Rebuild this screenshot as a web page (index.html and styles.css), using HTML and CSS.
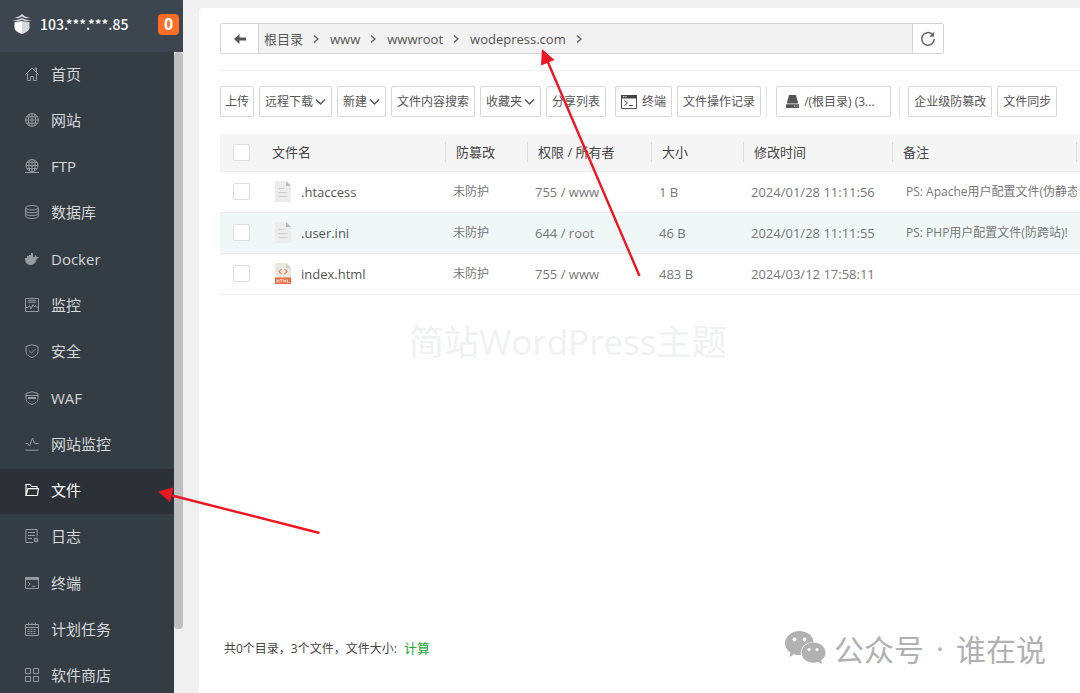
FILE: index.html
```html
<!DOCTYPE html>
<html lang="zh-CN">
<head>
<meta charset="utf-8">
<title>文件</title>
<link rel="stylesheet" href="styles.css">
</head>
<body>
<svg class="defs" aria-hidden="true">
  <symbol id="chev-right" viewBox="0 0 6 8"><path d="M1 .5 5 4 1 7.500" fill="none" stroke="currentColor" stroke-width="1.500"/></symbol>
  <symbol id="chev-down" viewBox="0 0 11 8"><path d="M1 1.500 5.500 6 10 1.500" fill="none" stroke="currentColor" stroke-width="1.300"/></symbol>
  <symbol id="doc" viewBox="0 0 16 21"><path d="M0 0h11l5 5v16H0z" fill="#ececec"/><path d="M11 0l5 5h-5z" fill="#b9b9b9"/><path d="M3.500 7.500h6M3.500 11.500h9M3.500 15.500h9" stroke="#cfcfcf"/></symbol>
</svg>
<div class="app">
  <aside class="sidebar">
    <header class="server">
      <svg class="logo" viewBox="0 0 20 20"><path d="M10 0 13 2.500 18 4 13.500 4.200 10 2.500 6.500 4.200 2 4 7 2.500z" fill="#ddd"/><path d="M0 6.800 6 5.800 10 4 14 5.800 20 6.800 14 7.300 10 5.800 6 7.300z" fill="#ddd"/><path d="M2.500 8.300 10 7v13c-4.500-1.500-7.500-3.500-7.500-6.500z" fill="#fff"/><path d="M17.500 8.300 10 7v13c4.500-1.500 7.500-3.500 7.500-6.500z" fill="#d8d8d8"/></svg>
      <span class="ip">103.***.***.85</span>
      <span class="count">0</span>
    </header>
    <div class="scroller">
      <nav class="nav">
        <a href="#"><svg viewBox="0 0 14 14"><path d="M.5 7.500 7 1l6.500 6.500M10 3V1h1.500v4M2.500 6.500v7h3V9.500h3v4h3v-7"/></svg>首页</a>
        <a href="#"><svg viewBox="0 0 14 14"><circle cx="7" cy="7" r="6.400"/><path d="M7 .5v13M.5 7h13M1.500 3.800h11M1.500 10.200h11M4.500 1.200c-1.500 4-1.500 8 0 11.600M9.500 1.200c1.500 4 1.500 8 0 11.600"/></svg>网站</a>
        <a href="#"><svg viewBox="0 0 14 14"><circle cx="7" cy="6.500" r="6"/><path d="M7 .5v12M1 6.500h12M2 3.500h10M2 9.500h10M4.800 1c-1.300 4-1.300 7 0 11M9.200 1c1.300 4 1.300 7 0 11M0 13.500h14"/></svg>FTP</a>
        <a href="#"><svg viewBox="0 0 14 14"><ellipse cx="7" cy="2.700" rx="6.300" ry="2.200"/><path d="M.7 2.700v8.500c0 3 12.600 3 12.600 0V2.700M.7 5.500c0 3 12.600 3 12.600 0M.7 8.400c0 3 12.600 3 12.600 0"/></svg>数据库</a>
        <a href="#"><svg viewBox="0 0 14 14"><path d="M0 6h2V4h2V3h2V1h2v4h1.500c.5-1 .5-2 1-2 1 .5 1 1.500 1 2H14c-.3 1.200-1.300 1.600-2.300 1.700C11 10.500 9 13 5.500 13 1.500 13 0 10 0 6z" fill="currentColor" stroke="none"/></svg>Docker</a>
        <a href="#"><svg viewBox="0 0 14 14"><path d="M.5.500h13v13H.500zM3 2.500h8M3 4.300h8M1 9.500h2l1.500-2L6 11l2-4.500L9.500 9l1-1.500L11.500 9h1.500"/></svg>监控</a>
        <a href="#"><svg viewBox="0 0 14 14"><path d="M7 .7 13 2.500v5c0 3-3 5-6 6-3-1-6-3-6-6v-5zM4.200 6.800l2.300 2.200 3.800-3.800"/></svg>安全</a>
        <a href="#"><svg viewBox="0 0 14 14"><path d="M7 .7 13 2.500v5c0 3-3 5-6 6-3-1-6-3-6-6v-5zM1 4.500h12"/><path d="M3 7h8" stroke-width="2"/></svg>WAF</a>
        <a href="#"><svg viewBox="0 0 14 14"><path d="M.5 6.500h2.500l1.500 2.500L7.500 1l2 5.500h4M.5 13.200h13"/></svg>网站监控</a>
        <a href="#" class="active" aria-current="page"><svg viewBox="0 0 14 14"><path d="M1 12.500V1.500h4l1.500 2H12v2.200M1 12.500 3 5.700h10.500l-1.200 6.800z" stroke-width="1.200"/></svg>文件</a>
        <a href="#"><svg viewBox="0 0 14 14"><path d="M8 13.500H.9V.5h11.200v7M3 3.500h7M3 6.500h7M3 9.500h4"/><circle cx="11" cy="11" r="1.600" stroke-width="1.400"/></svg>日志</a>
        <a href="#"><svg viewBox="0 0 14 14"><path d="M.5 1.500h13v11H.500zM3 6l2.200 2L3 10M7 10.300h3.500"/><path d="M.5 2.700h13" stroke-width="2.400"/></svg>终端</a>
        <a href="#"><svg viewBox="0 0 14 14"><path d="M.5 2.500h13v11H.500zM.5 5.500h13M3.500.5v3M7 .5v3M10.500.5v3"/><path d="M2.500 7.500h9M2.500 9.500h9M2.500 11.500h9" stroke-dasharray="2 1"/></svg>计划任务</a>
        <a href="#"><svg viewBox="0 0 14 14"><path d="M.5.500h5v5h-5zM8.500.500h5v5h-5zM.5 8.500h5v5h-5zM8.500 8.500h5v5h-5z"/></svg>软件商店</a>
      </nav>
      <div class="track"><div class="thumb"></div></div>
    </div>
  </aside>

  <main class="panel">
    <div class="pathbar">
      <button type="button" class="back" aria-label="返回"><svg viewBox="0 0 12 10"><path d="M0 5 5.500 0v3.500H12v3H5.500V10z" fill="#555"/></svg></button>
      <div class="crumbs">
        <a href="#">根目录</a><svg><use href="#chev-right"/></svg>
        <a href="#">www</a><svg><use href="#chev-right"/></svg>
        <a href="#">wwwroot</a><svg><use href="#chev-right"/></svg>
        <a href="#">wodepress.com</a><svg><use href="#chev-right"/></svg>
      </div>
      <button type="button" class="reload" aria-label="刷新"><svg viewBox="0 0 16 16"><path d="M12.500 3.500A6.300 6.300 0 1 0 14.300 8" fill="none" stroke="#666" stroke-width="1.500"/><path d="M14 .8v5H9.500z" fill="#666"/></svg></button>
    </div>

    <div class="toolbar">
      <button type="button" class="upload">上传</button>
      <button type="button">远程下载<svg class="down"><use href="#chev-down"/></svg></button>
      <button type="button">新建<svg class="down"><use href="#chev-down"/></svg></button>
      <button type="button">文件内容搜索</button>
      <button type="button">收藏夹<svg class="down"><use href="#chev-down"/></svg></button>
      <button type="button">分享列表</button>
      <button type="button" class="terminal"><svg viewBox="0 0 16 14"><path d="M.5.500h15v13H.500z" fill="none" stroke="#555"/><path d="M0 0h16v3.500H0z" fill="#444"/><path d="M2 1.700h4" stroke="#fff" stroke-dasharray="1 .7"/><path d="M3.500 5.500 6.500 8l-3 2.500M8 10.500h4" fill="none" stroke="#555"/></svg>终端</button>
      <button type="button">文件操作记录</button>
      <i class="sep"></i>
      <button type="button" class="disk"><svg viewBox="0 0 13 13"><path d="M3 0h7l2.200 8.500H.800z" fill="#555"/><path d="M0 9.300h13V13H0z" fill="#555"/><path d="M8 11.200h1M10.500 11.200h1" stroke="#fff"/></svg>/(根目录) (3...</button>
      <i class="sep"></i>
      <button type="button">企业级防篡改</button>
      <button type="button">文件同步</button>
    </div>

    <table class="files">
      <colgroup><col class="c-check"><col class="c-name"><col class="c-guard"><col class="c-owner"><col class="c-size"><col class="c-time"><col><col class="c-end"></colgroup>
      <thead>
        <tr><th><input type="checkbox" aria-label="全选"></th><th><span>文件名</span></th><th><span>防篡改</span></th><th><span>权限 / 所有者</span></th><th><span>大小</span></th><th><span>修改时间</span></th><th><span>备注</span></th><th></th></tr>
      </thead>
      <tbody>
        <tr><td><input type="checkbox" aria-label=".htaccess"></td><td class="name"><a href="#"><svg><use href="#doc"/></svg>.htaccess</a></td><td class="cn">未防护</td><td>755 / www</td><td>1 B</td><td>2024/01/28 11:11:56</td><td class="note">PS: Apache用户配置文件(伪静态</td><td></td></tr>
        <tr class="hover"><td><input type="checkbox" aria-label=".user.ini"></td><td class="name"><a href="#"><svg><use href="#doc"/></svg>.user.ini</a></td><td class="cn">未防护</td><td>644 / root</td><td>46 B</td><td>2024/01/28 11:11:55</td><td class="note">PS: PHP用户配置文件(防跨站)!</td><td></td></tr>
        <tr><td><input type="checkbox" aria-label="index.html"></td><td class="name"><a href="#"><svg viewBox="0 0 16 21"><path d="M0 0h11l5 5v16H0z" fill="#e9e9df"/><path d="M11 0l5 5h-5z" fill="#cfcfc2"/><path d="M6.500 6 4 8.500 6.500 11M9.500 6 12 8.500 9.500 11" fill="none" stroke="#f0845c" stroke-width="1.200"/><path d="M0 14.500h16V21H0z" fill="#ee6b3c"/><path d="M2 16.300v3.400M4 16.300v3.400M2 18h2M5 16.600h2.500M6.200 16.600v3.100M8.500 19.700v-3l1.200 1.600 1.200-1.600v3M12.500 16.300v3.100h2" fill="none" stroke="#fff" stroke-width=".7"/></svg>index.html</a></td><td class="cn">未防护</td><td>755 / www</td><td>483 B</td><td>2024/03/12 17:58:11</td><td class="note"></td><td></td></tr>
      </tbody>
    </table>

    <p class="site-mark">简站WordPress主题</p>

    <footer class="summary">共0个目录，3个文件，文件大小: <a href="#">计算</a></footer>
  </main>
</div>

<div class="account">
  <svg viewBox="0 0 41 34"><path d="M14.500 0C22 0 28.500 5 28.500 11.500 20 10.500 14.500 17 16 24c-2 .2-5 0-7-.8L4.500 26l1-4.500C2 19.500 0 16 0 12.500 0 5.500 6.500 0 14.500 0z" fill="#b1b1b1"/><circle cx="9.500" cy="8.500" r="1.900" fill="#fff"/><circle cx="19.500" cy="8.500" r="1.900" fill="#fff"/><path d="M28.500 11.500c6.500 0 12 4.500 12 10.300 0 3.200-1.800 5.700-4.300 7.500L37 33l-4-2c-8 2.500-16.500-2-16.500-9.200 0-5.800 5.500-10.300 12-10.300z" fill="#b1b1b1"/><circle cx="24" cy="18.500" r="1.600" fill="#fff"/><circle cx="32" cy="18.500" r="1.600" fill="#fff"/></svg>
  <span>公众号</span><span class="dot">·</span><span>谁在说</span>
</div>

<svg class="arrows" viewBox="0 0 1080 693" aria-hidden="true">
  <g stroke="#ee1620" stroke-width="2.400"><path d="M547 60 639.500 276M172 495.500 319.500 533"/></g>
  <path d="M542 49l12.500 11L541 65.500zM158 491.500l15.500-4-3.500 14.500z" fill="#ee1620"/>
</svg>
</body>
</html>
```
FILE: styles.css
```css
* { box-sizing: border-box; }
body {
  margin: 0;
  height: 100vh;
  overflow: hidden;
  position: relative;
  background: #f0f0f0;
  color: #555;
  font: 13px/20px "Open Sans", "Noto Sans CJK SC", sans-serif;
}
a { color: inherit; text-decoration: none; }
button { font: inherit; color: inherit; cursor: pointer; }
.defs { display: none; }
.app { display: flex; height: 100%; }

/* Sidebar */
.sidebar {
  flex: 0 0 183px;
  display: flex;
  flex-direction: column;
  background: #353d44;
}
.server {
  flex: 0 0 52px;
  display: flex;
  align-items: center;
  padding: 0 4px 4px 12px;
  background: #3d454e;
  color: #fff;
}
.logo { width: 20px; height: 20px; }
.ip { margin-left: 8px; font: 500 14px/20px "Noto Sans CJK SC", sans-serif; }
.count {
  margin-left: auto;
  width: 21px;
  border-radius: 4px;
  background: #ff6d26;
  text-align: center;
  font-size: 16px;
  line-height: 21px;
  font-weight: 700;
}
.scroller { flex: 1; min-height: 0; display: flex; overflow: hidden; }
.nav {
  flex: 1;
  display: grid;
  grid-auto-rows: 1fr;
  gap: 1px;
  height: calc(100% + 6px);
}
.nav a {
  display: flex;
  align-items: center;
  gap: 12px;
  padding: 0 0 2px 25px;
  color: #d4d6d8;
  font-size: 15px;
}
.nav svg {
  width: 14px;
  height: 14px;
  fill: none;
  stroke: currentColor;
  color: #969b9f;
}
.nav .active { background: #2c3138; color: #fff; }
.nav .active svg { color: #fff; }
.track { width: 9px; background: #f0f0f0; }
.thumb { height: 90%; border-radius: 4px; background: #bfbfbf; }

/* Main panel */
.panel {
  flex: 1;
  min-width: 0;
  display: flex;
  flex-direction: column;
  margin: 8px 0 0 16px;
  padding: 15px 0 34px 21px;
  border-radius: 4px 0 0 0;
  background: #fff;
  overflow: hidden;
}
.pathbar {
  display: flex;
  height: 31px;
  margin-right: 136px;
  border: 1px solid #d4d4d4;
  border-radius: 2px;
  background: #f2f2f2;
}
.pathbar button {
  display: grid;
  place-items: center;
  padding: 0;
  border: 0;
  background: #fff;
}
.pathbar .back { width: 38px; border-right: 1px solid #d4d4d4; }
.pathbar .reload { width: 31px; border-left: 1px solid #d4d4d4; }
.back svg { width: 12px; height: 10px; }
.reload svg { width: 16px; height: 16px; }
.crumbs { flex: 1; display: flex; align-items: center; padding-left: 5px; }
.crumbs svg { width: 6px; height: 8px; margin: 0 11px 0 10px; color: #666; }

.toolbar {
  display: flex;
  gap: 5px;
  height: 48px;
  margin-top: 16px;
  padding-top: 15px;
  border-top: 1px solid #eee;
  font-size: 12px;
}
.toolbar button {
  display: flex;
  align-items: center;
  height: 31px;
  padding: 0 5px;
  border: 1px solid #d8d8d8;
  border-radius: 2px;
  background: #fff;
  white-space: nowrap;
}
.toolbar .upload { padding: 0 4px; }
.toolbar .down { width: 11px; height: 8px; margin-left: 2px; }
.toolbar .terminal { gap: 5px; margin-left: 4px; }
.terminal svg { width: 16px; height: 14px; }
.toolbar .disk { gap: 5px; width: 115px; margin: 0 3px 0 4px; padding-left: 9px; }
.disk svg { width: 13px; height: 13px; }
.sep { width: 1px; height: 31px; background: #e6e6e6; }
.disk + .sep { margin-right: 3px; }

/* File table */
.files {
  width: 100%;
  margin-top: 16px;
  border-collapse: collapse;
  table-layout: fixed;
}
.c-check { width: 42px; }
.c-name { width: 184px; }
.c-guard { width: 82px; }
.c-owner { width: 124px; }
.c-size { width: 92px; }
.c-time { width: 149px; }
.c-end { width: 3px; }
.files th {
  height: 37px;
  padding: 0;
  background: #f5f5f5;
  color: #444;
  font-weight: 400;
  text-align: left;
}
.files th span {
  display: block;
  padding-left: 10px;
  border-right: 1px solid #ddd;
}
.files tr { border-bottom: 1px solid #ededed; }
.files td {
  height: 41px;
  padding: 0 0 0 7px;
  overflow: hidden;
  white-space: nowrap;
  color: #777;
}
.files .cn, .files .note { font-size: 12px; }
.files .note { padding-left: 13px; }
.files .name { padding-left: 13px; color: #555; }
.files th:first-child, .files td:first-child { padding-left: 13px; }
.files td:last-child { padding: 0; }
.name a { display: flex; align-items: center; gap: 10px; }
.name svg { width: 16px; height: 21px; }
.files .hover { background: #eff8f7; }
input[type="checkbox"] {
  appearance: none;
  display: block;
  width: 17px;
  height: 17px;
  margin: 0;
  border: 1px solid #ddd;
  border-radius: 2px;
  background: #fff;
}

.site-mark {
  margin: 24px 0 0 189px;
  color: #f0f1f1;
  font-size: 35px;
  line-height: 46px;
}
.summary { margin-top: auto; padding-left: 4px; font-size: 12px; color: #444; }
.summary a { margin-left: 4px; font-size: 13px; color: #20a53a; }

/* Overlays */
.account {
  position: absolute;
  right: 34px;
  bottom: 24px;
  display: flex;
  align-items: center;
  color: #b1b1b1;
  font: 30px/42px "Noto Sans CJK SC", sans-serif;
}
.account svg { width: 41px; height: 34px; margin-right: 8px; }
.account .dot { width: 32px; text-align: center; font-family: "Open Sans", sans-serif; }
.arrows {
  position: absolute;
  top: 0;
  left: 0;
  width: 1080px;
  height: 693px;
  pointer-events: none;
}
```
